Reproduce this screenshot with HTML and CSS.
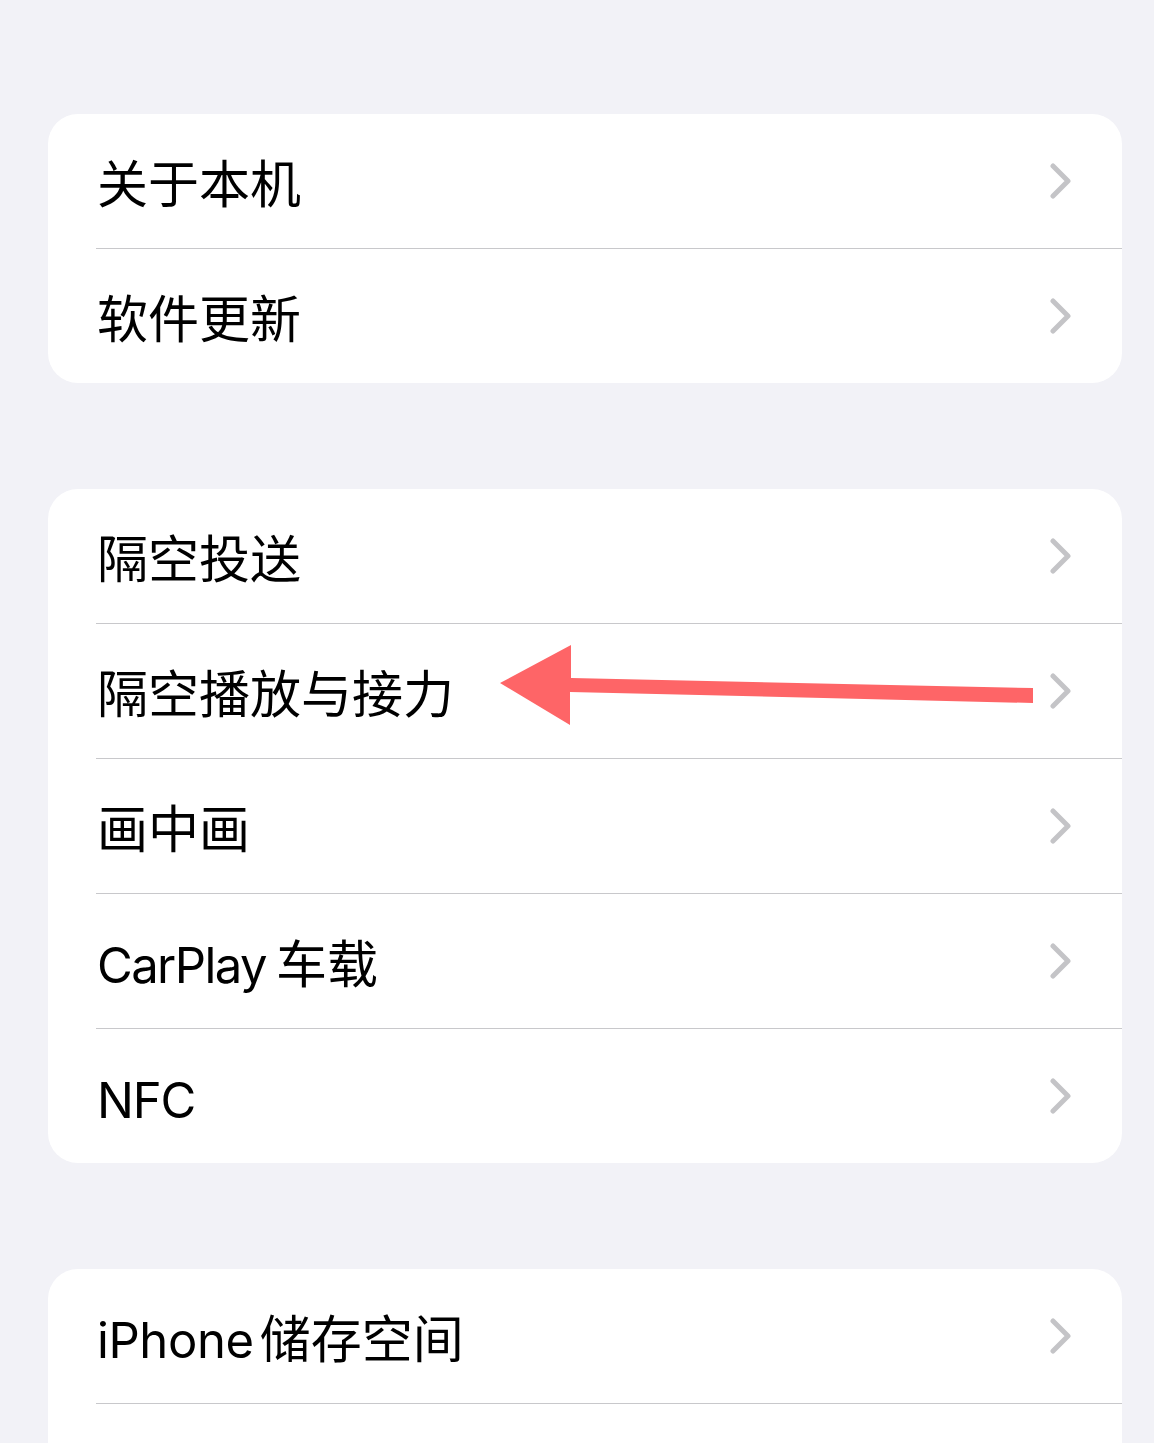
FILE: index.html
```html
<!DOCTYPE html>
<html lang="zh-CN">

<head>
    <meta charset="UTF-8">
    <meta name="viewport" content="width=device-width, initial-scale=1.0">
    <title>通用</title>
    <link rel="stylesheet" href="styles.css">
</head>

<body>
    <div class="settings">
        <div class="group">
            <div class="row"><span class="label">关于本机</span><svg class="chevron" viewBox="0 0 22 36"><polyline points="3,3 18,18 3,33" /></svg></div>
            <div class="row"><span class="label">软件更新</span><svg class="chevron" viewBox="0 0 22 36"><polyline points="3,3 18,18 3,33" /></svg></div>
        </div>

        <div class="group">
            <div class="row"><span class="label">隔空投送</span><svg class="chevron" viewBox="0 0 22 36"><polyline points="3,3 18,18 3,33" /></svg></div>
            <div class="row"><span class="label">隔空播放与接力</span><svg class="chevron" viewBox="0 0 22 36"><polyline points="3,3 18,18 3,33" /></svg></div>
            <div class="row"><span class="label">画中画</span><svg class="chevron" viewBox="0 0 22 36"><polyline points="3,3 18,18 3,33" /></svg></div>
            <div class="row"><span class="label"><span class="latin carplay">CarPlay </span>车载</span><svg class="chevron" viewBox="0 0 22 36"><polyline points="3,3 18,18 3,33" /></svg></div>
            <div class="row"><span class="label"><span class="latin">NFC</span></span><svg class="chevron" viewBox="0 0 22 36"><polyline points="3,3 18,18 3,33" /></svg></div>
        </div>

        <div class="group">
            <div class="row"><span class="label"><span class="latin iphone">iPhone</span>储存空间</span><svg class="chevron" viewBox="0 0 22 36"><polyline points="3,3 18,18 3,33" /></svg></div>
            <div class="row"></div>
        </div>
    </div>

    <!-- red pointer drawn over the list -->
    <svg class="pointer" width="1154" height="1443" viewBox="0 0 1154 1443">
        <polygon points="500,683 571,645 571,678 1033,688 1033,703 570,692 570,725" />
    </svg>
</body>

</html>
```

FILE: styles.css
```css
* {
    margin: 0;
    padding: 0;
    box-sizing: border-box;
}

body {
    font-family: "Inter", "Noto Sans CJK SC", sans-serif;
    background: #f2f2f7;
    color: #000;
    height: 1443px;
    overflow: hidden;
    position: relative;
}

.settings {
    display: flex;
    flex-direction: column;
    gap: 106px;
    padding: 114px 32px 0 48px;
}

.group {
    background: #fff;
    border-radius: 30px;
    overflow: hidden;
}

.row {
    display: flex;
    align-items: center;
    justify-content: space-between;
    height: 134px;
    margin-left: 48px;
    padding-right: 50px;
    box-sizing: content-box;
}

.row + .row {
    border-top: 1px solid #c8c8cb;
}

.label {
    font-size: 51px;
    line-height: 1;
    padding: 6px 0 0 1px;
}

.latin {
    font-size: 49px;
    letter-spacing: -1.2px;
}

.latin.carplay {
    letter-spacing: -1.6px;
    word-spacing: -2px;
}

.latin.iphone {
    letter-spacing: -0.4px;
    margin-right: 6px;
}

.chevron {
    width: 22px;
    height: 36px;
    fill: none;
    stroke: #c4c4c7;
    stroke-width: 5;
    stroke-linecap: round;
    stroke-linejoin: round;
}

.pointer {
    position: absolute;
    top: 0;
    left: 0;
    pointer-events: none;
}

.pointer polygon {
    fill: #fe6567;
}
```
